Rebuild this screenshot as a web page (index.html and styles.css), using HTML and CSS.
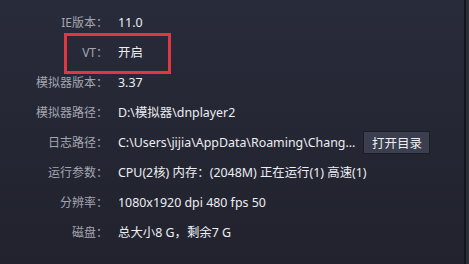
FILE: index.html
```html
<!DOCTYPE html>
<html>
<head>
<meta charset="utf-8">
<link rel="stylesheet" href="styles.css">
</head>
<body>
<div class="panel">
  <div class="row"><span class="label">IE版本：</span><span class="value">11.0</span></div>
  <div class="row hl"><span class="label">VT：</span><span class="value">开启</span><span class="mark"></span></div>
  <div class="row"><span class="label">模拟器版本：</span><span class="value">3.37</span></div>
  <div class="row"><span class="label">模拟器路径：</span><span class="value">D:\模拟器\dnplayer2</span></div>
  <div class="row"><span class="label">日志路径：</span><span class="value path">C:\Users\jijia\AppData\Roaming\Chang...</span><button class="btn">打开目录</button></div>
  <div class="row"><span class="label">运行参数：</span><span class="value">CPU(2核) 内存：(2048M) 正在运行(1) 高速(1)</span></div>
  <div class="row"><span class="label">分辨率：</span><span class="value">1080x1920 dpi 480 fps 50</span></div>
  <div class="row"><span class="label">磁盘：</span><span class="value">总大小8 G，剩余7 G</span></div>
</div>
</body>
</html>
```
FILE: styles.css
```css
html, body {
  margin: 0;
  padding: 0;
  width: 469px;
  height: 264px;
  overflow: hidden;
  background: #2b2d39;
}
.panel {
  width: 466px;
  height: 264px;
  box-sizing: border-box;
  padding-top: 7px;
  border-right: 2px solid #15161c;
  background: linear-gradient(#282b3a, #21222d);
  font-family: "Noto Sans", "Noto Sans CJK SC", sans-serif;
  font-size: 12px;
  display: flex;
  flex-direction: column;
}
.row {
  position: relative;
  height: 30px;
  display: flex;
  align-items: center;
}
.label {
  width: 108px;
  text-align: right;
  color: #a3a6b0;
  flex-shrink: 0;
}
.value {
  margin-left: 10px;
  color: #eceef2;
  white-space: nowrap;
  font-size: 12.4px;
}
.mark {
  position: absolute;
  left: 64px;
  top: -4px;
  width: 107px;
  height: 41px;
  box-sizing: border-box;
  border: 3px solid #e0383f;
}
.btn {
  margin-left: 8px;
  width: 67px;
  height: 23px;
  padding: 0;
  background: #3b3e4e;
  border: 1px solid #1b1c24;
  color: #eceef2;
  font-family: "Noto Sans CJK SC", sans-serif;
  font-size: 12.5px;
}
```
